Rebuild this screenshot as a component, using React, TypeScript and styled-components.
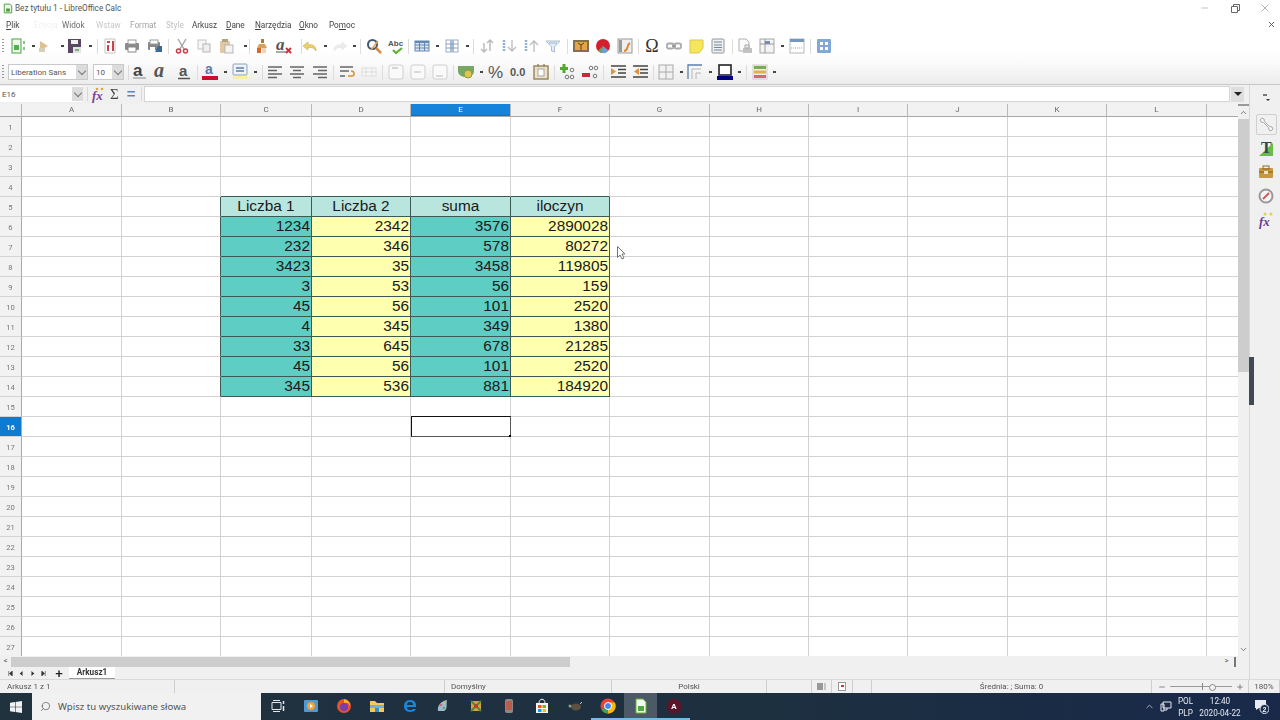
import React from "react";
import styled, { createGlobalStyle } from "styled-components";
import { ChevronDown, ChevronUp, Minus, Plus, Search, X } from "lucide-react";

const GlobalStyle = createGlobalStyle`
  html, body { margin: 0; padding: 0; background: #fff; overflow: hidden; }
  * { box-sizing: border-box; }
`;

const uiFont = `Roboto, "Noto Sans", sans-serif`;
const colWidths = [22, 100, 99, 91, 99, 100, 99, 100, 99, 99, 100, 99, 100, 33];
const colNames = ["A", "B", "C", "D", "E", "F", "G", "H", "I", "J", "K", "L", ""];

const tableRows = [
  ["1234", "2342", "3576", "2890028"],
  ["232", "346", "578", "80272"],
  ["3423", "35", "3458", "119805"],
  ["3", "53", "56", "159"],
  ["45", "56", "101", "2520"],
  ["4", "345", "349", "1380"],
  ["33", "645", "678", "21285"],
  ["45", "56", "101", "2520"],
  ["345", "536", "881", "184920"],
];
const tableHead = ["Liczba 1", "Liczba 2", "suma", "iloczyn"];

type G = React.ReactNode;
const icons: Record<string, G> = {
  newdoc: <g><rect x="2" y="1" width="9" height="14" fill="#eef7e8" stroke="#4ba04b" /><rect x="4" y="7" width="5" height="5" fill="#55ad55" /><rect x="13" y="3" width="2" height="3" fill="#8cc48c" /><rect x="13" y="9" width="2" height="3" fill="#8cc48c" /></g>,
  open: <g><path d="M4 3l8 5-8 5z" fill="#e0c08f" /><rect x="3" y="10" width="6" height="4" fill="#d8cfba" /></g>,
  save: <g><path d="M1 1h13v14H1z" fill="#5a4763" /><rect x="4" y="2" width="7" height="4" fill="#f0f0f0" /><rect x="6" y="9" width="8" height="6" fill="#e3e3e3" /><rect x="8" y="11" width="4" height="2" fill="#7fae7f" /></g>,
  pdf: <g><path d="M3 1h10v14H3z" fill="#fff" stroke="#c4c4c4" /><path d="M5 4h3M11 3v10M6 7v6" stroke="#c8434a" strokeWidth="2" /></g>,
  print: <g><rect x="1" y="5" width="14" height="7" rx="1" fill="#8a8a8a" /><rect x="4" y="2" width="8" height="4" fill="#fff" stroke="#999" /><rect x="4" y="9" width="8" height="5" fill="#fff" stroke="#888" /></g>,
  preview: <g><rect x="1" y="4" width="12" height="8" rx="1" fill="#888" /><rect x="3" y="2" width="8" height="4" fill="#fff" stroke="#999" /><path d="M8 14l3-6h4v6z" fill="#39689c" /><rect x="3" y="9" width="5" height="5" fill="#fff" /></g>,
  cut: <g><path d="M4 1l6 10M12 1L6 11" stroke="#a5a5a5" strokeWidth="1.400" /><circle cx="4.500" cy="13" r="2" fill="none" stroke="#cc3c4a" strokeWidth="1.500" /><circle cx="11.500" cy="13" r="2" fill="none" stroke="#cc3c4a" strokeWidth="1.500" /></g>,
  copy: <g><rect x="2" y="2" width="8" height="9" fill="#f6f6f6" stroke="#c4c4c4" /><rect x="7" y="6" width="7" height="8" fill="#efefef" stroke="#b5b5b5" /></g>,
  paste: <g><rect x="2" y="3" width="10" height="12" rx="1" fill="#dfc8a3" /><rect x="4" y="1" width="6" height="3" fill="#b3a280" /><rect x="7" y="7" width="8" height="8" fill="#f4f4f4" stroke="#b5b5b5" /></g>,
  clone: <g><path d="M7 1h3v4H7z" fill="#a67c3c" /><path d="M5 6h6l2 4H3z" fill="#d9a15a" /><path d="M3 10h4v5H3z" fill="#d8692a" /><path d="M8 10h4v5H8z" fill="#e8d6b8" /></g>,
  clear: <g><text x="0" y="12" fontFamily="Liberation Serif, serif" fontStyle="italic" fontWeight="700" fontSize="17" fill="#555">a</text><path d="M0 14h10" stroke="#555" /><path d="M10 10l5 5m0-5l-5 5" stroke="#c8343a" strokeWidth="2" /></g>,
  undo: <path d="M14 13c0-5-3-7-8-6V4L1 8l5 4V9.500c4-.5 6 .5 8 3.500z" fill="#edd168" stroke="#c9aa45" strokeWidth=".6" />,
  redo: <path d="M2 13c0-5 3-7 8-6V4l5 4-5 4V9.500c-4-.5-6 .5-8 3.500z" fill="#ececec" stroke="#e2e2e2" strokeWidth=".6" />,
  find: <g><circle cx="6.500" cy="6.500" r="4.500" fill="#fff" stroke="#46566f" strokeWidth="2" /><path d="M10 10l5 5" stroke="#d58a43" strokeWidth="2.500" /><path d="M5 12L12 3" stroke="#e7a15a" strokeWidth="1.500" /></g>,
  spell: <g><text x="0" y="8" fontFamily="Liberation Sans, sans-serif" fontWeight="700" fontSize="8" fill="#555">Abc</text><path d="M5 12l3 3 6-5" fill="none" stroke="#5cb531" strokeWidth="2.200" /></g>,
  table: <g><rect x="1" y="3" width="14" height="10" fill="#dbe6f3" stroke="#6487b5" /><path d="M1 7h14M1 10h14M5.500 3v10M10.500 3v10" stroke="#6487b5" /><rect x="1" y="3" width="14" height="2" fill="#6487b5" /></g>,
  cols: <g><rect x="2" y="2" width="12" height="12" fill="#fff" stroke="#9aadc5" /><rect x="6" y="2" width="4" height="12" fill="#a5bddb" /><path d="M2 6h12M2 10h12" stroke="#8aa0bb" /></g>,
  sort: <path d="M5 14V5M2 11l3 3 3-3M11 2v11M8 5l3-3 3 3" fill="none" stroke="#bcbcbc" strokeWidth="1.500" />,
  asc: <g><path d="M3 2v12" stroke="#8fb0d8" strokeWidth="2.500" strokeDasharray="2 1" /><path d="M11 2v11M7 9l4 4 4-4" fill="none" stroke="#bcbcbc" strokeWidth="1.300" /></g>,
  desc: <g><path d="M3 2v12" stroke="#8fb0d8" strokeWidth="2.500" strokeDasharray="2 1" /><path d="M11 14V3M7 7l4-4 4 4" fill="none" stroke="#bcbcbc" strokeWidth="1.300" /></g>,
  filter: <g><path d="M1 3h14L9.500 9v5l-3-1V9z" fill="#e4edf6" stroke="#adbccd" /><path d="M4 5h8" stroke="#97b6da" /></g>,
  image: <g><rect x="0" y="2" width="16" height="12" fill="#84704f" /><rect x="2" y="4" width="12" height="8" fill="#e3a83d" /><path d="M8 12V7l-3-2m3 2l3-2" stroke="#5b3c1b" fill="none" /></g>,
  chart: <g><circle cx="8" cy="8" r="7" fill="#d4202c" /><path d="M8 8l5.500 4.500A7 7 0 0 1 6 14.800z" fill="#6da0d0" /><path d="M8 8L6 14.800A7 7 0 0 1 3 13z" fill="#68ad54" /></g>,
  pivot: <g><rect x="1" y="1" width="14" height="14" fill="#efefef" stroke="#999" /><rect x="2" y="2" width="3" height="12" fill="#999" /><path d="M7 13c5 0 2-6 6-8" fill="none" stroke="#e08b32" strokeWidth="2" /></g>,
  link: <g><rect x="1" y="5.500" width="6.500" height="5" rx="1.500" fill="none" stroke="#aaa" strokeWidth="1.800" /><rect x="8.500" y="5.500" width="6.500" height="5" rx="1.500" fill="none" stroke="#aaa" strokeWidth="1.800" /><path d="M6 8h4" stroke="#999" strokeWidth="1.800" /></g>,
  note: <path d="M2 2h13v8l-4 5H2z" fill="#f6e65c" stroke="#d7c84f" />,
  headers: <g><rect x="2" y="1" width="12" height="14" rx="1" fill="#eef1f4" stroke="#949494" /><path d="M4 4h8M4 7h8M4 9.500h8M4 12h8" stroke="#7a8390" /></g>,
  parea: <g><path d="M2 1h7l3 3v9H2z" fill="#fafafa" stroke="#b0b0b0" /><path d="M6 10h9v5H6z" fill="#c2c2c2" /><path d="M8 7h4v3H8z" fill="#eee" stroke="#a5a5a5" /></g>,
  freeze: <g><rect x="1" y="1" width="14" height="14" fill="#f4f4f4" stroke="#a5a5a5" /><path d="M1 6h14M6 1v14" stroke="#999" /><rect x="6" y="3" width="5" height="3" fill="#6a90bb" /></g>,
  split: <g><rect x="1" y="1" width="14" height="14" fill="#fff" stroke="#b5b5b5" /><rect x="1" y="1" width="14" height="3" fill="#7397bf" /><path d="M2 10h12" stroke="#d89a55" strokeDasharray="1 1" /></g>,
  nav: <g><rect x="1" y="1" width="14" height="14" rx="1" fill="#82a8d7" /><g fill="#fff"><rect x="4" y="4" width="3" height="3" /><rect x="9" y="4" width="3" height="3" /><rect x="4" y="9" width="3" height="3" /><rect x="9" y="9" width="3" height="3" /></g></g>,
  bold: <g><text x="1" y="12" fontFamily="Liberation Sans, sans-serif" fontWeight="700" fontSize="17" fill="#444">a</text><path d="M1 14h13" stroke="#888" strokeWidth="1" /></g>,
  italic: <text x="0" y="13" fontFamily="Liberation Serif, serif" fontWeight="700" fontStyle="italic" fontSize="20" fill="#555">a</text>,
  under: <g><text x="3" y="12" fontFamily="Liberation Sans, sans-serif" fontWeight="700" fontSize="15" fill="#555">a</text><path d="M2 14.500h12" stroke="#555" strokeWidth="1.500" /></g>,
  fcolor: <g><text x="3" y="10" fontFamily="Liberation Sans, sans-serif" fontWeight="700" fontSize="14" fill="#5a79ad">a</text><rect x="0" y="12" width="16" height="4" fill="#c8102e" /></g>,
  bcolor: <g><rect x="1" y="0" width="14" height="11" rx="1" fill="#eef3f9" stroke="#8aa3c6" /><path d="M4 4h8M4 7h8" stroke="#5f7ca6" strokeWidth="1.400" /><rect x="1" y="12" width="15" height="3" fill="#faf19a" /></g>,
  left: <path d="M1 3h14M1 6.500h9M1 10h14M1 13.500h9" stroke="#666" strokeWidth="1.500" />,
  center: <path d="M1 3h14M4 6.500h8M1 10h14M4 13.500h8" stroke="#666" strokeWidth="1.500" />,
  right: <path d="M1 3h14M6 6.500h9M1 10h14M6 13.500h9" stroke="#666" strokeWidth="1.500" />,
  wrap: <g><path d="M1 3h13M1 7h9M1 12h5" stroke="#666" strokeWidth="1.400" /><path d="M9 12h4c3 0 3-5-1-5" fill="none" stroke="#e08b32" strokeWidth="1.500" /></g>,
  merge: <g><rect x="1" y="4" width="14" height="8" fill="#f7f7f7" stroke="#ddd" /><path d="M1 8h14M5 4v8M11 4v8" stroke="#ddd" /></g>,
  vtop: <g><rect x="1" y="1" width="14" height="14" rx="2" fill="#fafafa" stroke="#cfcfcf" /><path d="M4 4h6" stroke="#bbb" strokeWidth="1.200" /></g>,
  vmid: <g><rect x="1" y="1" width="14" height="14" rx="2" fill="#fafafa" stroke="#cfcfcf" /><path d="M4 8h7" stroke="#c4c4c4" strokeWidth="1.200" /></g>,
  vbot: <g><rect x="1" y="1" width="14" height="14" rx="2" fill="#fafafa" stroke="#cfcfcf" /><path d="M4 12h7" stroke="#c4c4c4" strokeWidth="1.200" /></g>,
  money: <g><path d="M0 2h16v5c0 4-4 6-8 6S0 11 0 7z" fill="#76a864" /><circle cx="10" cy="10" r="4" fill="#dcc850" stroke="#8a9a3f" /></g>,
  percent: <text x="-1" y="14" fontFamily="Liberation Sans, sans-serif" fontSize="17" fill="#555">%</text>,
  num: <text x="0" y="12" fontFamily="Liberation Sans, sans-serif" fontWeight="700" fontSize="11" fill="#555">0.0</text>,
  date: <g><rect x="1" y="2" width="14" height="13" fill="#ece3c8" stroke="#9a8a62" strokeWidth="1.500" /><rect x="5" y="5" width="6" height="7" fill="#fff" stroke="#a5a5a5" /><path d="M5 0v3M11 0v3" stroke="#9a8a62" strokeWidth="1.500" /></g>,
  adddec: <g><path d="M5 0v9M1 4.500h8" stroke="#55a82f" strokeWidth="3" /><circle cx="13" cy="6" r="1.800" fill="none" stroke="#777" /><circle cx="8" cy="13" r="1.800" fill="none" stroke="#777" /><circle cx="13" cy="13" r="1.800" fill="none" stroke="#777" /></g>,
  deldec: <g><rect x="0" y="9" width="8" height="4" fill="#c92838" /><circle cx="9" cy="4" r="1.800" fill="none" stroke="#777" /><circle cx="14" cy="4" r="1.800" fill="none" stroke="#777" /><circle cx="13" cy="12" r="1.800" fill="none" stroke="#777" /></g>,
  indent: <g><path d="M1 2h15M8 5.500h8M8 9h8M1 13h15" stroke="#444" strokeWidth="1.500" /><path d="M1 4l5 3.500L1 11z" fill="#e2913d" /></g>,
  outdent: <g><path d="M1 2h15M8 5.500h8M8 9h8M1 13h15" stroke="#444" strokeWidth="1.500" /><path d="M7 4L2 7.500 7 11z" fill="#e2913d" /></g>,
  borders: <g><rect x="1" y="1" width="14" height="14" fill="#f1f1f1" stroke="#aaa" /><path d="M8 1v14M1 8h14" stroke="#aaa" /></g>,
  bstyle: <g><path d="M1 15V1h14" fill="none" stroke="#5a80ae" strokeWidth="1.300" /><path d="M5 15V5h9M9 15V9h5" fill="none" stroke="#b5b5b5" /></g>,
  bcol: <g><rect x="2" y="1" width="12" height="10" fill="#fff" stroke="#222" strokeWidth="1.600" /><rect x="0" y="12" width="16" height="4" fill="#000080" /></g>,
  cond: <g><rect x="1" y="1" width="14" height="14" fill="#eee" stroke="#ccc" /><rect x="2" y="2" width="12" height="3" fill="#7aaa60" /><rect x="2" y="6.500" width="12" height="3" fill="#e3b04b" /><rect x="2" y="11" width="12" height="3" fill="#d86a6a" /></g>,
};

type Item = [number, string];
const row1: Item[] = [[18, "newdoc"], [33, "dot"], [44, "open"], [62, "dot"], [75, "save"], [90, "dot"], [97, "sep"], [110, "pdf"], [132, "print"], [155, "preview"], [168, "sep"], [182, "cut"], [204, "copy"], [226, "paste"], [245, "dot"], [249, "sep"], [262, "clone"], [284, "clear"], [301, "sep"], [310, "undo"], [325, "dot"], [340, "redo"], [354, "dot"], [360, "sep"], [374, "find"], [396, "spell"], [408, "sep"], [422, "table"], [437, "dot"], [452, "cols"], [467, "dot"], [473, "sep"], [487, "sort"], [509, "asc"], [531, "desc"], [553, "filter"], [567, "sep"], [581, "image"], [603, "chart"], [625, "pivot"], [638, "sep"], [652, "omega"], [674, "link"], [696, "note"], [718, "headers"], [732, "sep"], [745, "parea"], [767, "freeze"], [782, "dot"], [797, "split"], [810, "sep"], [824, "nav"]];
const row2: Item[] = [[48, "font"], [108.500, "size"], [128, "sep"], [140, "bold"], [162, "italic"], [184, "under"], [197, "sep"], [210, "fcolor"], [225, "dot"], [240, "bcolor"], [255, "dot"], [262, "sep"], [275, "left"], [297, "center"], [320, "right"], [333, "sep"], [347, "wrap"], [369, "merge"], [382, "sep"], [396, "vtop"], [418, "vmid"], [440, "vbot"], [453, "sep"], [466, "money"], [481, "dot"], [497, "percent"], [518, "num"], [541, "date"], [554, "sep"], [567, "adddec"], [590, "deldec"], [603, "sep"], [618, "indent"], [640, "outdent"], [653, "sep"], [666, "borders"], [681, "dot"], [695, "bstyle"], [710, "dot"], [725, "bcol"], [739, "dot"], [746, "sep"], [760, "cond"], [774, "dot"]];

const menu: { label: G; w: number; faded?: number }[] = [
  { label: <><u>P</u>lik</>, w: 28 },
  { label: "Edycja", w: 28, faded: 0.08 },
  { label: "Widok", w: 34, faded: 0.8 },
  { label: "Wstaw", w: 34, faded: 0.3 },
  { label: "Format", w: 36, faded: 0.5 },
  { label: "Style", w: 26, faded: 0.35 },
  { label: "Arkusz", w: 34 },
  { label: <><u>D</u>ane</>, w: 29 },
  { label: <><u>N</u>arzędzia</>, w: 44 },
  { label: <><u>O</u>kno</>, w: 30 },
  { label: <>Po<u>m</u>oc</>, w: 34 },
];

const slotWidth = (kind: string) => {
  if (kind === "font") return 80;
  if (kind === "size") return 31;
  if (kind === "sep") return 1;
  if (kind === "dot") return 4;
  return 17;
};

const Page = styled.div`
  width: 1280px;
  height: 720px;
  display: flex;
  flex-direction: column;
  overflow: hidden;
  position: relative;
  font-family: ${uiFont};
  color: #444;
  filter: blur(0.4px);
`;
const TopArea = styled.header`
  height: 85px;
  flex: none;
  background: linear-gradient(#fff 0, #fff 50px, #fbfbfb 62px, #ececec 84px);
  border-bottom: 1px solid #c8c8c8;
`;
const TitleBar = styled.div`
  height: 16px;
  display: flex;
  align-items: center;
  padding-left: 3px;
  font-size: 8.2px;
  color: #555;
`;
const TitleIcon = styled.svg`
  width: 10px;
  height: 11px;
  flex: none;
`;
const TitleText = styled.span`
  margin-left: 2px;
  flex: 1;
`;
const WinControls = styled.div`
  display: flex;
  align-items: center;
  color: #666;
`;
const WinButton = styled.div`
  width: 30px;
  height: 14px;
  display: flex;
  align-items: center;
  justify-content: center;
`;
const MenuBar = styled.nav`
  height: 18px;
  display: flex;
  align-items: center;
  position: relative;
  padding-left: 6px;
  font-size: 8.2px;
  color: #444;
`;
const MenuItem = styled.span<{ $w: number; $faded?: number }>`
  width: ${(p) => p.$w}px;
  flex: none;
  opacity: ${(p) => p.$faded ?? 1};
`;
const MenuClose = styled.div`
  position: absolute;
  right: 4px;
  top: 4px;
  color: #555;
  display: flex;
`;
const ToolRow = styled.div<{ $h: number; $top: number }>`
  height: ${(p) => p.$h}px;
  display: flex;
  align-items: center;
  padding: ${(p) => p.$top}px 0 0 2px;
`;
const Grip = styled.div`
  width: 2px;
  height: 15px;
  background: repeating-linear-gradient(#999 0 1px, transparent 1px 3px);
`;
const Slot = styled.div<{ $gap: number; $w: number }>`
  margin-left: ${(p) => p.$gap}px;
  width: ${(p) => p.$w}px;
  flex: none;
  display: flex;
  align-items: center;
  justify-content: center;
`;
const Svg = styled.svg`
  width: 16px;
  height: 16px;
  display: block;
  flex: none;
  overflow: visible;
`;
const Sep = styled.div`
  width: 1px;
  height: 15px;
  background: #dcdcdc;
`;
const Dot = styled.div`
  width: 3px;
  height: 2px;
  background: #444;
`;
const Omega = styled.span`
  font-family: "Liberation Serif", serif;
  font-size: 18px;
  line-height: 16px;
  color: #333;
`;
const Combo = styled.div`
  width: 100%;
  height: 16px;
  display: flex;
  align-items: center;
  background: #fff;
  border: 1px solid #c9c9c9;
  font-size: 8px;
  color: #555;
  padding-left: 2px;
`;
const ComboText = styled.span`
  flex: 1;
  white-space: nowrap;
`;
const ComboArrow = styled.div`
  width: 11px;
  height: 14px;
  flex: none;
  background: #dcdcdc;
  display: flex;
  align-items: center;
  justify-content: center;
  &::after {
    content: "";
    width: 5px;
    height: 5px;
    margin-top: -3px;
    border-right: 1px solid #777;
    border-bottom: 1px solid #777;
    transform: rotate(45deg);
  }
`;
const Body = styled.div`
  flex: 1;
  display: flex;
  min-height: 0;
`;
const SheetArea = styled.div`
  width: 1249px;
  display: flex;
  flex-direction: column;
`;
const FormulaBar = styled.div`
  height: 19px;
  flex: none;
  display: flex;
  align-items: center;
  background: #f0f0f0;
  padding-bottom: 1px;
`;
const NameBox = styled.div`
  width: 83px;
  height: 16px;
  display: flex;
  align-items: center;
  background: #fff;
  font-size: 8px;
  color: #555;
  padding-left: 2px;
`;
const FormulaIcons = styled.div`
  width: 61px;
  height: 100%;
  flex: none;
  display: flex;
  align-items: center;
  gap: 3px;
  padding-left: 4px;
  font-family: "Liberation Serif", serif;
`;
const FormulaSep = styled.div<{ $left?: number }>`
  width: 1px;
  height: 14px;
  margin-left: ${(p) => p.$left ?? 0}px;
  background: #d8d8d8;
`;
const SumMark = styled.span`
  font-size: 15px;
  line-height: 14px;
  color: #444;
`;
const EqMark = styled.span`
  margin-left: 5px;
  font-size: 15px;
  line-height: 14px;
  font-weight: 700;
  color: #5b84b8;
  font-family: "Liberation Sans", sans-serif;
`;
const FormulaInput = styled.div`
  width: 1086px;
  height: 16px;
  background: #fff;
  border: 1px solid #d4d4d4;
`;
const FormulaDrop = styled.div`
  width: 13px;
  height: 15px;
  margin-left: 1px;
  background: #dedede;
  display: flex;
  align-items: center;
  justify-content: center;
  &::after {
    content: "";
    border-left: 4px solid transparent;
    border-right: 4px solid transparent;
    border-top: 4px solid #222;
  }
`;
const GridWrap = styled.div`
  height: 552px;
  flex: none;
  display: flex;
`;
const Cells = styled.div`
  width: 1238px;
  flex: none;
  display: grid;
  grid-template-columns: ${colWidths.map((w) => `${w}px`).join(" ")};
  grid-template-rows: 13px repeat(27, 20px);
  overflow: hidden;
  font-family: "Liberation Sans", Arial, sans-serif;
  background: #fff;
`;
const ColHead = styled.div<{ $active?: boolean }>`
  background: ${(p) => (p.$active ? "linear-gradient(#1583dc 0 10px, #0a6fc2)" : "#f2f2f2")};
  color: ${(p) => (p.$active ? "#fff" : "#666")};
  border-right: 1px solid #b8b8b8;
  border-bottom: 1px solid #a8a8a8;
  font-family: ${uiFont};
  font-size: 8px;
  line-height: 11px;
  text-align: center;
`;
const RowHead = styled.div<{ $active?: boolean }>`
  background: ${(p) => (p.$active ? "#0f7bd0" : "#f2f2f2")};
  color: ${(p) => (p.$active ? "#fff" : "#777")};
  font-weight: ${(p) => (p.$active ? 700 : 400)};
  border-right: 1px solid #a8a8a8;
  border-bottom: 1px solid #d4d4d4;
  font-family: ${uiFont};
  font-size: 7.6px;
  padding-top: 1px;
  display: flex;
  align-items: center;
  justify-content: center;
`;
const Cell = styled.div<{ $bg?: string; $right?: boolean; $bottom?: boolean; $head?: boolean; $selected?: boolean }>`
  position: relative;
  background: ${(p) => p.$bg ?? "#fff"};
  border-right: 1px solid ${(p) => (p.$right ? "#3a5a52" : "#d2d2d2")};
  border-bottom: 1px solid ${(p) => (p.$bottom ? "#3a5a52" : "#d2d2d2")};
  color: #1a1a1a;
  font-size: 15.4px;
  line-height: 18px;
  text-align: ${(p) => (p.$head ? "center" : "right")};
  padding-right: ${(p) => (p.$head ? 0 : 1)}px;
  white-space: nowrap;
  ${(p) =>
    p.$selected &&
    `&::before {
      content: "";
      position: absolute;
      inset: -1px -1px -1px 0;
      border: 1px solid #111;
      border-right-color: #555;
      border-bottom-color: #555;
    }
    &::after {
      content: "";
      position: absolute;
      right: -3px;
      bottom: -3px;
      width: 4px;
      height: 4px;
      background: #000;
    }`}
`;
const VScroll = styled.div`
  width: 11px;
  flex: none;
  display: flex;
  flex-direction: column;
  background: #f0f0f0;
  color: #555;
`;
const VGrip = styled.div`
  height: 2px;
  flex: none;
  background: #999;
`;
const VThumb = styled.div`
  width: 100%;
  height: 253px;
  flex: none;
  background: #cdcdcd;
`;
const ScrollArrow = styled.div`
  height: 13px;
  flex: none;
  display: flex;
  align-items: center;
  justify-content: center;
`;
const VSpacer = styled.div`
  flex: 1;
`;
const HScrollBar = styled.div`
  height: 11px;
  flex: none;
  display: flex;
  align-items: center;
  background: #f0f0f0;
  color: #555;
`;
const HArrow = styled.div`
  width: 11px;
  height: 11px;
  flex: none;
  font-size: 8px;
  line-height: 10px;
  text-align: center;
  font-family: ${uiFont};
`;
const HThumb = styled.div`
  width: 559px;
  height: 10px;
  background: #cdcdcd;
`;
const HRest = styled.div`
  flex: 1;
`;
const HEnd = styled.div`
  width: 2px;
  height: 10px;
  margin: 0 13px 0 2px;
  background: #777;
`;
const TabBar = styled.div`
  flex: 1;
  display: flex;
  align-items: center;
  background: #f0f0f0;
  padding-left: 5px;
`;
const TabNav = styled.svg`
  width: 11px;
  height: 5px;
  flex: none;
`;
const TabPlus = styled.div`
  width: 10px;
  margin-left: 5px;
  font-size: 13px;
  font-weight: 700;
  line-height: 11px;
  color: #222;
  text-align: center;
  font-family: "Liberation Sans", sans-serif;
`;
const Tab = styled.div`
  width: 46px;
  height: 12px;
  margin-left: 5px;
  align-self: flex-start;
  background: #fff;
  border-bottom: 1px solid #999;
  font-size: 8.2px;
  line-height: 11px;
  font-weight: 700;
  color: #333;
  text-align: center;
`;
const Sidebar = styled.aside`
  flex: 1;
  position: relative;
  display: flex;
  flex-direction: column;
  align-items: center;
  background: #f0f0f0;
  border-left: 1px solid #d8d8d8;
  padding: 1px 0 0 2px;
`;
const SideButton = styled.div<{ $top: number; $boxed?: boolean }>`
  width: 21px;
  height: 21px;
  flex: none;
  margin-top: ${(p) => p.$top}px;
  display: flex;
  align-items: center;
  justify-content: center;
  border: 1px solid ${(p) => (p.$boxed ? "#cfcfcf" : "transparent")};
  border-radius: 2px;
`;
const Handle = styled.div`
  position: absolute;
  left: -1px;
  top: 272px;
  width: 5px;
  height: 48px;
  background: #3f4a54;
`;
const StatusBar = styled.footer`
  height: 14px;
  flex: none;
  display: flex;
  align-items: center;
  background: #f0f0f0;
  border-top: 1px solid #dadada;
  font-size: 8px;
  color: #555;
`;
const StatusCell = styled.div<{ $w: number; $center?: boolean; $pad?: number }>`
  width: ${(p) => p.$w}px;
  height: 100%;
  flex: none;
  display: flex;
  align-items: center;
  justify-content: ${(p) => (p.$center ? "center" : "flex-start")};
  padding-left: ${(p) => p.$pad ?? 0}px;
  border-right: 1px solid #cfcfcf;
  gap: 2px;
`;
const ZoomSlider = styled.div`
  flex: 1;
  display: flex;
  align-items: center;
  padding: 0 4px 0 6px;
`;
const ZoomTrack = styled.div`
  flex: 1;
  height: 1px;
  margin: 0 4px;
  background: #999;
  position: relative;
  &::before {
    content: "";
    position: absolute;
    left: 32px;
    top: -3px;
    width: 1px;
    height: 7px;
    background: #888;
  }
  &::after {
    content: "";
    position: absolute;
    left: 39px;
    top: -2px;
    width: 5px;
    height: 5px;
    border-radius: 50%;
    background: #f4f4f4;
    border: 1px solid #888;
  }
`;
const Taskbar = styled.div`
  height: 27px;
  flex: none;
  display: flex;
  align-items: center;
  background: linear-gradient(90deg, #21323f, #1d3040 60%, #18294a);
  color: #eef;
`;
const StartBtn = styled.div`
  width: 32px;
  height: 100%;
  display: flex;
  align-items: center;
  justify-content: center;
`;
const SearchBox = styled.div`
  width: 229px;
  height: 100%;
  display: flex;
  align-items: center;
  gap: 7px;
  padding-left: 8px;
  background: #f1f1f1;
  color: #555;
  font-family: "Noto Sans", sans-serif;
  font-size: 9.6px;
`;
const MirrorSearch = styled(Search)`
  transform: scaleX(-1);
`;
const TaskSlot = styled.div<{ $active?: boolean; $open?: boolean }>`
  width: 33px;
  height: 100%;
  flex: none;
  display: flex;
  align-items: center;
  justify-content: center;
  background: ${(p) => (p.$active ? "#4b5a66" : "transparent")};
  border-bottom: 2px solid ${(p) => (p.$open ? "#76b9ed" : "transparent")};
`;
const Tray = styled.div`
  margin-left: auto;
  height: 100%;
  display: flex;
  align-items: center;
  padding-right: 3px;
  font-size: 8.2px;
  color: #e4e8ee;
`;
const TrayCol = styled.div<{ $w: number }>`
  width: ${(p) => p.$w}px;
  display: flex;
  flex-direction: column;
  align-items: center;
  line-height: 12px;
`;
const Cursor = styled.svg`
  position: absolute;
  left: 617px;
  top: 246px;
  width: 9px;
  height: 14px;
`;

const ToolIcon = ({ name }: { name: string }) => {
  if (name === "sep") return <Sep />;
  if (name === "dot") return <Dot />;
  if (name === "omega") return <Omega>Ω</Omega>;
  if (name === "font" || name === "size")
    return (
      <Combo>
        <ComboText>{name === "font" ? "Liberation Sans" : "10"}</ComboText>
        <ComboArrow />
      </Combo>
    );
  return <Svg viewBox="0 0 16 16">{icons[name]}</Svg>;
};

// slots are laid out in flow, the gap before each one comes from the icon's centre
const Toolbar = ({ items, h, top }: { items: Item[]; h: number; top: number }) => {
  let edge = 4;
  return (
    <ToolRow $h={h} $top={top}>
      <Grip />
      {items.map(([center, name], i) => {
        const w = slotWidth(name);
        const gap = center - w / 2 - edge;
        edge = center + w / 2;
        return (
          <Slot key={i} $gap={gap} $w={w}>
            <ToolIcon name={name} />
          </Slot>
        );
      })}
    </ToolRow>
  );
};

const Sheet = () => {
  const cells: React.ReactNode[] = [];
  cells.push(<ColHead key="corner" />);
  colNames.forEach((name) => {
    cells.push(<ColHead key={`h${name}`} $active={name === "E"}>{name}</ColHead>);
  });
  for (let r = 1; r <= 27; r++) {
    cells.push(<RowHead key={`r${r}`} $active={r === 16}>{r}</RowHead>);
    for (let c = 0; c < 13; c++) {
      const inTable = c >= 2 && c <= 5 && r >= 5 && r <= 14;
      const key = `${r}-${c}`;
      if (inTable) {
        const isHead = r === 5;
        const bg = isHead ? "#b9e5df" : c % 2 === 0 ? "#5ecdc3" : "#ffffb0";
        const text = isHead ? tableHead[c - 2] : tableRows[r - 6][c - 2];
        cells.push(<Cell key={key} $bg={bg} $right $bottom $head={isHead}>{text}</Cell>);
      } else {
        cells.push(
          <Cell
            key={key}
            $right={c === 1 && r >= 5 && r <= 14}
            $bottom={r === 4 && c >= 2 && c <= 5}
            $selected={r === 16 && c === 4}
          />
        );
      }
    }
  }
  return <Cells>{cells}</Cells>;
};

const taskIcons: G[] = [
  <g fill="none" stroke="#e6e6e6"><path d="M2 4.500h9v7H2zM3 2.500h7M3 13.500h7" /><path d="M13.500 3v3M13.500 8v5" strokeWidth="1.500" /></g>,
  <g><rect x="1" y="2" width="14" height="12" rx="1" fill="#4f9bd1" /><circle cx="8" cy="8" r="4" fill="#f4a13c" /><path d="M7 6l3 2-3 2z" fill="#fff" /></g>,
  <g><circle cx="8" cy="8" r="7" fill="#e8512a" /><circle cx="8" cy="9" r="4" fill="#7a3ea8" /><path d="M8 1c4 1 6 4 6 7-1-3-3-4-6-3z" fill="#f9b233" /></g>,
  <g><path d="M1 3h5l2 2h7v9H1z" fill="#f3ca52" /><rect x="1" y="7" width="14" height="3" fill="#6fb4d8" /><rect x="6" y="10" width="4" height="4" fill="#3a8fc0" /></g>,
  <path d="M8 2C4 2 2 5 2 8s2 6 6 6c3 0 5-1 6-3h-3c-1 1-2 1-3 1-2 0-3-1-3-3h9V8c0-4-2-6-6-6zM5 7c0-2 1-3 3-3s3 1 3 3z" fill="#1a86d8" />,
  <g><path d="M3 13c-1-5 3-10 9-11-1 5 1 9-3 11z" fill="#9fb8c9" /><circle cx="6" cy="7" r="1" fill="#d9533b" /><circle cx="9" cy="5" r="1" fill="#e8c13a" /><circle cx="9" cy="10" r="1" fill="#4b9d55" /></g>,
  <g><rect x="3" y="3" width="10" height="10" fill="#d9a13f" /><path d="M3 3l5 5 5-5M3 13l5-5 5 5" stroke="#4f8a3c" fill="none" strokeWidth="2" /><circle cx="8" cy="8" r="2" fill="#c9372c" /></g>,
  <g><rect x="4" y="1" width="8" height="14" rx="2" fill="#8a8a8a" /><rect x="5" y="3" width="6" height="9" fill="#b75d4a" /></g>,
  <g><rect x="2" y="5" width="12" height="10" fill="#f5f5f5" /><path d="M5 5c0-5 6-5 6 0" fill="none" stroke="#f5f5f5" /><rect x="4" y="7" width="3.500" height="3" fill="#f25022" /><rect x="8.500" y="7" width="3.500" height="3" fill="#7fba00" /><rect x="4" y="11" width="3.500" height="3" fill="#00a4ef" /><rect x="8.500" y="11" width="3.500" height="3" fill="#ffb900" /></g>,
  <g><ellipse cx="9" cy="9" rx="5" ry="3.500" fill="#5c5040" /><circle cx="3" cy="8" r="1.500" fill="#9d9d80" /><path d="M13 6l2-2" stroke="#ccc" /></g>,
  <g><circle cx="8" cy="8" r="7.500" fill="#ea4335" /><path d="M8 8L1.500 11.800A7.500 7.500 0 0 0 8 15.500z" fill="#34a853" /><path d="M8 4.500h6.800A7.500 7.500 0 0 1 8 15.500z" fill="#fbbc05" /><circle cx="8" cy="8" r="3.500" fill="#4285f4" stroke="#fff" /></g>,
  <g><path d="M3 1h7l3 3v11H3z" fill="#f4f9f0" stroke="#5cb531" /><rect x="5" y="8" width="6" height="5" fill="#4fa93f" /></g>,
  <g><circle cx="8" cy="8" r="7.500" fill="#5a1529" /><text x="8" y="11" textAnchor="middle" fontFamily="Liberation Sans, sans-serif" fontWeight="700" fontSize="8" fill="#fff">A</text></g>,
];

export default function App() {
  return (
    <Page>
      <GlobalStyle />
      <TopArea>
        <TitleBar>
          <TitleIcon viewBox="0 0 16 16">
            <path d="M2 1h9l3 3v11H2z" fill="#edf6e6" stroke="#4c9b3c" strokeWidth="1.500" />
            <rect x="5" y="8" width="6" height="5" fill="#4c9b3c" />
          </TitleIcon>
          <TitleText>Bez tytułu 1 - LibreOffice Calc</TitleText>
          <WinControls>
            <WinButton><Minus size={10} strokeWidth={1} /></WinButton>
            <WinButton>
              <svg width="9" height="9" viewBox="0 0 9 9"><path d="M.5 2.500h6v6h-6zM2.500 2.500v-2h6v6h-2" fill="none" stroke="#666" /></svg>
            </WinButton>
            <WinButton><X size={12} strokeWidth={1} /></WinButton>
          </WinControls>
        </TitleBar>
        <MenuBar>
          {menu.map((m, i) => (
            <MenuItem key={i} $w={m.w} $faded={m.faded}>{m.label}</MenuItem>
          ))}
          <MenuClose><X size={9} strokeWidth={2.5} /></MenuClose>
        </MenuBar>
        <Toolbar items={row1} h={24} top={0} />
        <Toolbar items={row2} h={26} top={2} />
      </TopArea>
      <Body>
        <SheetArea>
          <FormulaBar>
            <NameBox>
              <ComboText>E16</ComboText>
              <ComboArrow />
            </NameBox>
            <FormulaIcons>
              <FormulaSep />
              <Svg viewBox="0 0 16 16">
                <text x="1" y="14" fontFamily="Liberation Serif, serif" fontStyle="italic" fontWeight="700" fontSize="13" fill="#7c3f97">fx</text>
                <circle cx="6" cy="3" r="1.300" fill="#d9a92e" />
                <circle cx="11" cy="3" r="1.300" fill="#d9a92e" />
              </Svg>
              <SumMark>Σ</SumMark>
              <EqMark>=</EqMark>
              <FormulaSep $left={2} />
            </FormulaIcons>
            <FormulaInput />
            <FormulaDrop />
          </FormulaBar>
          <GridWrap>
            <Sheet />
            <VScroll>
              <VGrip />
              <ScrollArrow><ChevronUp size={9} /></ScrollArrow>
              <VThumb />
              <VSpacer />
              <ScrollArrow><ChevronDown size={9} /></ScrollArrow>
            </VScroll>
          </GridWrap>
          <HScrollBar>
            <HArrow>&lt;</HArrow>
            <HThumb />
            <HRest />
            <HArrow>&gt;</HArrow>
            <HEnd />
          </HScrollBar>
          <TabBar>
            <TabNav viewBox="0 0 11 7"><path d="M3 0v7M8 0v7L4 3.500z" stroke="#333" fill="#333" strokeWidth=".8" /></TabNav>
            <TabNav viewBox="0 0 11 7"><path d="M7 0v7L3 3.500z" fill="#333" /></TabNav>
            <TabNav viewBox="0 0 11 7"><path d="M4 0v7l4-3.500z" fill="#333" /></TabNav>
            <TabNav viewBox="0 0 11 7"><path d="M8 0v7M3 0v7l4-3.500z" stroke="#333" fill="#333" strokeWidth=".8" /></TabNav>
            <TabPlus>+</TabPlus>
            <Tab>Arkusz1</Tab>
          </TabBar>
        </SheetArea>
        <Sidebar>
          <SideButton $top={1}>
            <svg width="9" height="9" viewBox="0 0 9 9"><path d="M1 1h4v2H1z" fill="#777" /><path d="M4 6h4L6 8z" fill="#333" /></svg>
          </SideButton>
          <SideButton $top={6} $boxed>
            <Svg viewBox="0 0 16 16"><path d="M2 3l2-2 2 1 .5 2.500 5 5 2.500.5 1 2-2 2-2-1-.5-2.500-5-5L3 5z" fill="#f5f5f5" stroke="#aaa" /></Svg>
          </SideButton>
          <SideButton $top={3}>
            <Svg viewBox="0 0 16 16"><path d="M1 15L15 2v13z" fill="#6dbb46" /><text x="3" y="12" fontFamily="Liberation Serif, serif" fontWeight="700" fontSize="16" fill="#2b4a52">T</text></Svg>
          </SideButton>
          <SideButton $top={2}>
            <Svg viewBox="0 0 16 16"><rect x="1" y="4" width="14" height="10" rx="1" fill="#c7993f" /><rect x="5" y="2" width="6" height="3" fill="none" stroke="#8a6a2c" /><path d="M1 8h14" stroke="#7d5e22" /><rect x="6" y="7" width="4" height="3" fill="#efe3bc" /></Svg>
          </SideButton>
          <SideButton $top={3}>
            <Svg viewBox="0 0 16 16"><circle cx="8" cy="8" r="6.500" fill="#f4f4f4" stroke="#999" strokeWidth="2" /><path d="M5 11l6-6" stroke="#d2585a" strokeWidth="2" /></Svg>
          </SideButton>
          <SideButton $top={2}>
            <Svg viewBox="0 0 16 16"><text x="1" y="15" fontFamily="Liberation Serif, serif" fontStyle="italic" fontWeight="700" fontSize="13" fill="#6f3d97">fx</text><circle cx="7" cy="3" r="1.500" fill="#e4d04f" /><circle cx="13" cy="3" r="1.500" fill="#e4d04f" /></Svg>
          </SideButton>
          <Handle />
        </Sidebar>
      </Body>
      <StatusBar>
        <StatusCell $w={175} $pad={7}>Arkusz 1 z 1</StatusCell>
        <StatusCell $w={270} />
        <StatusCell $w={167} $pad={6}>Domyślny</StatusCell>
        <StatusCell $w={155} $center>Polski</StatusCell>
        <StatusCell $w={45} />
        <StatusCell $w={20} $center>
          <svg width="9" height="7" viewBox="0 0 9 7"><rect width="6" height="7" fill="#999" /><path d="M8 0v7" stroke="#999" /></svg>
        </StatusCell>
        <StatusCell $w={21} $center>
          <svg width="9" height="9" viewBox="0 0 9 9"><rect x=".5" y=".5" width="7" height="8" fill="#fff" stroke="#999" /><rect x="3" y="3" width="3" height="2" fill="#d0343a" /></svg>
        </StatusCell>
        <StatusCell $w={19} />
        <StatusCell $w={280} $center>Średnia: ; Suma: 0</StatusCell>
        <StatusCell $w={97}>
          <ZoomSlider>
            <Minus size={8} />
            <ZoomTrack />
            <Plus size={8} />
          </ZoomSlider>
        </StatusCell>
        <StatusCell $w={31} $center>180%</StatusCell>
      </StatusBar>
      <Taskbar>
        <StartBtn>
          <svg width="12" height="12" viewBox="0 0 12 12"><path d="M0 1.700l5-.7v4.700H0zM5.600.9L12 0v5.700H5.600zM0 6.300h5V11l-5-.7zM5.600 6.300H12V12l-6.400-.9z" fill="#f2f2f2" /></svg>
        </StartBtn>
        <SearchBox>
          <MirrorSearch size={11} strokeWidth={1.5} />
          Wpisz tu wyszukiwane słowa
        </SearchBox>
        {taskIcons.map((icon, i) => (
          <TaskSlot key={i} $active={i === 11} $open={i >= 10 && i <= 12}>
            <Svg viewBox="0 0 16 16">{icon}</Svg>
          </TaskSlot>
        ))}
        <Tray>
          <ChevronUp size={11} strokeWidth={1.5} />
          <TrayCol $w={22}>
            <svg width="12" height="11" viewBox="0 0 12 11"><path d="M3 1h8v6H3zM1 3h3v7H1zM7 7v2H4" fill="none" stroke="#e4e8ee" /></svg>
          </TrayCol>
          <TrayCol $w={17}><span>POL</span><span>PLP</span></TrayCol>
          <TrayCol $w={52}><span>12:40</span><span>2020-04-22</span></TrayCol>
          <TrayCol $w={31}>
            <svg width="15" height="15" viewBox="0 0 15 15"><path d="M1 1h11v8H5L2 11V9H1z" fill="#e8ecf2" /><circle cx="10.500" cy="10" r="4.500" fill="#18294a" stroke="#e8ecf2" /><text x="10.500" y="12.500" textAnchor="middle" fontSize="7" fontWeight="700" fill="#fff" fontFamily="Liberation Sans, sans-serif">2</text></svg>
          </TrayCol>
        </Tray>
      </Taskbar>
      <Cursor viewBox="0 0 9 14">
        <path d="M.5.500v11l2.500-2.500 2 4 2-1-2-4h3z" fill="#fff" stroke="#777" />
      </Cursor>
    </Page>
  );
}
